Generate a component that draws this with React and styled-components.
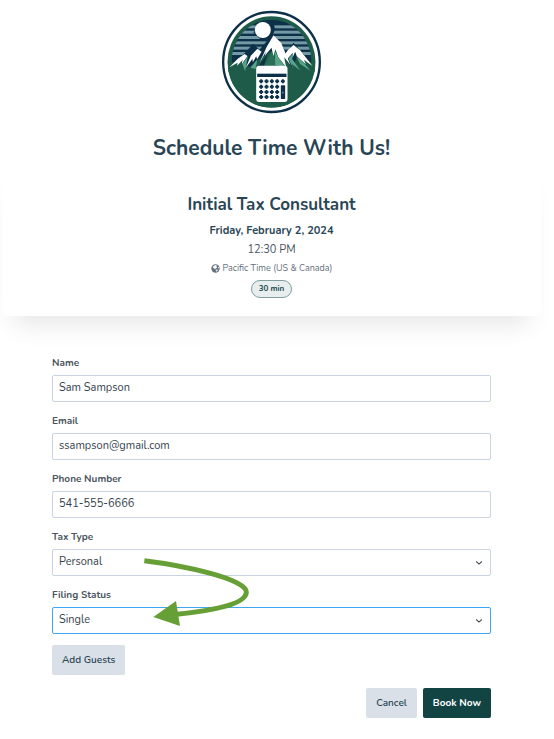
import { useState } from 'react';
import styled, { createGlobalStyle } from 'styled-components';

export default function App() {
  const [values, setValues] = useState({
    name: 'Sam Sampson',
    email: 'ssampson@gmail.com',
    phone: '541-555-6666',
    taxType: 'Personal',
    filingStatus: 'Single',
  });

  const handleChange = (event) => {
    setValues({ ...values, [event.target.name]: event.target.value });
  };

  return (
    <>
      <GlobalStyle />
      <Page>
        <Header>
          <Logo />
          <h1>Schedule Time With Us!</h1>
        </Header>

        <Summary>
          <h2>Initial Tax Consultant</h2>
          <strong className="date">Friday, February 2, 2024</strong>
          <span className="time">12:30 PM</span>
          <span className="zone">
            <Globe />
            Pacific Time (US &amp; Canada)
          </span>
          <Duration>30 min</Duration>
        </Summary>

        <Form onSubmit={(event) => event.preventDefault()}>
          <Field>
            <label htmlFor="name">Name</label>
            <Input id="name" name="name" value={values.name} onChange={handleChange} />
          </Field>
          <Field>
            <label htmlFor="email">Email</label>
            <Input id="email" name="email" type="email" value={values.email} onChange={handleChange} />
          </Field>
          <Field>
            <label htmlFor="phone">Phone Number</label>
            <Input id="phone" name="phone" type="tel" value={values.phone} onChange={handleChange} />
          </Field>
          <Choices>
            <Field>
              <label htmlFor="taxType">Tax Type</label>
              <SelectBox>
                <Select id="taxType" name="taxType" value={values.taxType} onChange={handleChange}>
                  <option>Personal</option>
                  <option>Business</option>
                </Select>
                <Chevron />
              </SelectBox>
            </Field>
            <Field>
              <label htmlFor="filingStatus">Filing Status</label>
              <SelectBox>
                <Select
                  id="filingStatus"
                  name="filingStatus"
                  value={values.filingStatus}
                  onChange={handleChange}
                  $active
                >
                  <option>Single</option>
                  <option>Married</option>
                </Select>
                <Chevron />
              </SelectBox>
            </Field>
            <Arrow />
          </Choices>
          <Button type="button">Add Guests</Button>
          <Actions>
            <Button type="button">Cancel</Button>
            <Button type="submit" $primary>Book Now</Button>
          </Actions>
        </Form>
      </Page>
    </>
  );
}

function Globe() {
  return (
    <svg viewBox="0 0 27 27" width="9" height="9" aria-hidden="true">
      <circle cx="13.5" cy="13.5" r="12.5" fill="#64717c" />
      <path d="M9 5 L14 3 L18 5 L16 8 L19 10 L15 13 L12 16 L9 13 L6 11 L6 8 Z" fill="#fff" />
      <path d="M14 17 L19 16 L21 19 L17 23 L15 22 Z M21 8 L24 10 L24 14 L21 12 Z" fill="#dfe3e6" />
    </svg>
  );
}

function Chevron() {
  return (
    <svg className="chevron" viewBox="0 0 8 6" width="8" height="6" aria-hidden="true">
      <path d="M1.2 1.5 L4 4.1 L6.8 1.5" fill="none" stroke="#4a4f54" strokeWidth="1.1" />
    </svg>
  );
}

function Arrow() {
  return (
    <ArrowSvg viewBox="0 0 390 270" width="130" height="90" aria-hidden="true">
      <path
        d="M43 47 C150 60 349 100 349 141 C349 178 245 197 140 208"
        fill="none"
        stroke="#669f36"
        strokeWidth="15"
      />
      <path d="M70 216 L138 168 L150 243 Z" fill="#669f36" />
    </ArrowSvg>
  );
}

const stripes = [64, 80, 96, 112, 128, 144];
const keyRows = [232, 248, 264, 279];
const keyColumns = [147, 163, 179, 195, 212];

function Logo() {
  return (
    <svg viewBox="24 15 308 318" width="103" height="106" role="img" aria-label="Mountain calculator logo">
      <defs>
        <clipPath id="disc">
          <ellipse cx="178" cy="174" rx="132" ry="137" />
        </clipPath>
        <clipPath id="sky">
          <path d="M58 174 A120 127 0 0 1 298 174 Z" />
        </clipPath>
      </defs>
      <ellipse cx="178" cy="174" rx="145" ry="150" fill="#fff" stroke="#0d3049" strokeWidth="7" />
      <ellipse cx="178" cy="174" rx="132" ry="137" fill="#1e5c49" />
      <g clipPath="url(#sky)">
        <rect x="46" y="40" width="264" height="134" fill="#0d3049" />
        {stripes.map((y) => (
          <rect key={y} x="56" y={y} width="246" height="9" fill="#7399a5" />
        ))}
        <path d="M145 46 C153 36 175 38 183 55 L189 76 L181 95 L164 112 L144 105 L124 86 Z" fill="#0d3049" />
      </g>
      <g clipPath="url(#disc)">
        <path d="M60 178 L98 147 L123 119 L142 137 L181 91 L224 146 L244 116 L298 178 L298 192 L60 192 Z" fill="#0d3049" />
        <path d="M44 190 L80 164 L112 190 L148 160 L192 134 L240 190 L260 150 L318 190 V310 H44 Z" fill="#1e5c49" />
        <path d="M52 190 L76 165 L97 150 L106 156 L89 181 L91 168 L75 185 L76 176 Z" fill="#fff" />
        <path d="M91 181 L107 156 L99 202 Z M115 191 L136 165 L130 195 Z" fill="#59a488" />
        <path d="M101 191 L116 155 L136 134 L148 143 L135 166 L132 157 L122 175 L121 164 Z" fill="#fff" />
        <path d="M138 188 L166 149 L153 192 L184 134 L180 188 Z" fill="#0d3049" />
        <path d="M154 190 L184 132 L191 190 Z" fill="#2a6f57" />
        <path d="M142 177 L163 130 L184 94 L207 117 L235 183 L216 160 L222 190 L198 159 L190 136 L184 156 L178 131 L158 155 L161 143 Z" fill="#fff" />
        <path d="M188 141 L198 160 L220 190 L189 184 Z" fill="#59a488" />
        <path d="M215 155 L228 137 L244 123 L264 139 L301 186 L275 167 L281 181 L254 157 L249 143 L241 161 L242 146 L225 166 Z" fill="#fff" />
        <path d="M229 164 L243 147 L240 165 L264 199 L240 181 L242 192 Z M252 157 L278 180 L295 200 L264 180 Z" fill="#59a488" />
      </g>
      <circle cx="152" cy="78" r="24" fill="#fff" />
      <rect x="132" y="185" width="94" height="109" rx="9" fill="#fff" />
      <path d="M135 209 H223 V219 H135 Z" fill="#0d3049" />
      {keyRows.map((y, row) =>
        keyColumns.slice(0, row === 0 ? 5 : 4).map((x) => (
          <path
            key={`${x}-${y}`}
            d={`M${x - 3} ${y - 6} h6 v3 h3 v6 h-3 v3 h-6 v-3 h-3 v-6 h3 Z`}
            fill="#0d3049"
          />
        ))
      )}
      <rect x="206" y="244" width="13" height="41" rx="2" fill="#0d3049" />
      <path d="M209 266 h6 M212 263 v6" stroke="#7596a3" strokeWidth="2" />
    </svg>
  );
}

const GlobalStyle = createGlobalStyle`
  * {
    box-sizing: border-box;
  }

  body {
    margin: 0;
    background-color: #fff;
    color: #4a5560;
    font-family: Nunito, "Noto Sans", sans-serif;
    font-size: 11px;
  }

  h1, h2 {
    margin: 0;
    color: #294656;
    font-weight: 700;
  }

  input, select, button {
    font-family: inherit;
  }
`;

const Page = styled.main`
  padding: 9px 13px 22px 2px;
`;

const Header = styled.header`
  display: flex;
  flex-direction: column;
  align-items: center;
  gap: 19px;

  svg {
    display: block;
  }

  h1 {
    font-size: 21px;
    line-height: 28px;
  }
`;

const Summary = styled.section`
  display: flex;
  flex-direction: column;
  align-items: center;
  padding: 31px 16px 18px;
  border-radius: 6px;
  box-shadow: 0 20px 24px -12px rgba(0, 0, 0, 0.1);

  h2 {
    margin-bottom: 4px;
    font-size: 17px;
    line-height: 24px;
  }

  .date {
    color: #294656;
    line-height: 20px;
  }

  .time {
    line-height: 18px;
  }

  .zone {
    display: flex;
    align-items: center;
    gap: 3px;
    margin-bottom: 3px;
    color: #64717c;
    font-size: 9px;
    line-height: 18px;
  }
`;

const Duration = styled.span`
  padding: 0 7px;
  border: 1px solid #7da09e;
  border-radius: 9px;
  background-color: #e7eeed;
  color: #19494a;
  font-size: 8px;
  font-weight: 700;
  line-height: 16px;
`;

const Form = styled.form`
  display: flex;
  flex-direction: column;
  align-items: flex-start;
  padding: 39px 50px 0;
`;

const Field = styled.div`
  display: flex;
  flex-direction: column;
  width: 100%;
  margin-bottom: 11px;

  label {
    margin-bottom: 4px;
    font-size: 10px;
    font-weight: 700;
    line-height: 16px;
  }
`;

const Input = styled.input`
  width: 100%;
  height: 27px;
  padding: 0 6px 2px;
  border: 1px solid #c9d3e4;
  border-radius: 2px;
  outline: none;
  background-color: #fff;
  color: #35424d;
  font-size: 11px;
`;

const Choices = styled.div`
  position: relative;
  width: 100%;
`;

const SelectBox = styled.div`
  display: grid;
  align-items: center;

  > * {
    grid-area: 1 / 1;
  }

  .chevron {
    justify-self: end;
    margin-right: 8px;
    pointer-events: none;
  }
`;

const Select = styled.select`
  appearance: none;
  width: 100%;
  height: 27px;
  padding: 0 24px 2px 6px;
  border: 1px solid ${({ $active }) => ($active ? '#3fa5f5' : '#c9d3e4')};
  border-radius: 2px;
  outline: none;
  background-color: #fff;
  color: #35424d;
  font-size: 11px;
`;

const ArrowSvg = styled.svg`
  position: absolute;
  top: 16px;
  left: 78px;
  pointer-events: none;
`;

const Button = styled.button`
  height: 30px;
  padding: 0 10px;
  border: 0;
  border-radius: 2px;
  background-color: ${({ $primary }) => ($primary ? '#134444' : '#dae0e7')};
  color: ${({ $primary }) => ($primary ? '#fff' : '#294656')};
  font-size: 10px;
  font-weight: ${({ $primary }) => ($primary ? 700 : 600)};
`;

const Actions = styled.div`
  display: flex;
  align-self: flex-end;
  gap: 6px;
  margin-top: 13px;
`;
